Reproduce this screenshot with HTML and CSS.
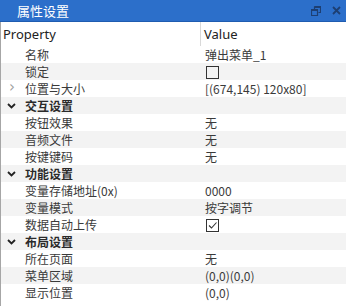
FILE: index.html
```html
<!DOCTYPE html>
<html>
<head>
<meta charset="utf-8">
<link rel="stylesheet" href="styles.css">
</head>
<body>
<div class="panel">
  <div class="titlebar">
    <span class="title">属性设置</span>
    <span class="tools">
      <svg class="ico" width="10" height="10" viewBox="0 0 10 10"><path d="M3.5 0.5h6v6h-2M0.5 3.5h6v6h-6z M3.5 0.5v3" fill="none" stroke="#1d3f73" stroke-width="1.2"/><path d="M0.5 3.5h6v1.5h-6z" fill="#1d3f73"/><path d="M3.5 0.5h6v1.5h-6z" fill="#1d3f73"/></svg>
      <svg class="ico" width="9" height="9" viewBox="0 0 9 9"><path d="M1 1l7 7M8 1l-7 7" stroke="#1d3f73" stroke-width="1.8"/></svg>
    </span>
  </div>
  <div class="grid">
    <div class="hd hname">Property</div><div class="hd hval">Value</div>

    <div class="row w"><div class="name">名称</div><div class="val">弹出菜单_1</div></div>
    <div class="row g"><div class="name">锁定</div><div class="val"><span class="cb"></span></div></div>
    <div class="row w"><div class="name"><span class="exp">›</span>位置与大小</div><div class="val">[(674,145) 120x80]</div></div>
    <div class="row g cat"><div class="name"><svg class="chev" width="9" height="6" viewBox="0 0 9 6"><path d="M1 1l3.5 3.5L8 1" fill="none" stroke="#222" stroke-width="1.8"/></svg>交互设置</div><div class="val"></div></div>
    <div class="row w"><div class="name">按钮效果</div><div class="val">无</div></div>
    <div class="row g"><div class="name">音频文件</div><div class="val">无</div></div>
    <div class="row w"><div class="name">按键键码</div><div class="val">无</div></div>
    <div class="row g cat"><div class="name"><svg class="chev" width="9" height="6" viewBox="0 0 9 6"><path d="M1 1l3.5 3.5L8 1" fill="none" stroke="#222" stroke-width="1.8"/></svg>功能设置</div><div class="val"></div></div>
    <div class="row w"><div class="name">变量存储地址(0x)</div><div class="val">0000</div></div>
    <div class="row g"><div class="name">变量模式</div><div class="val">按字调节</div></div>
    <div class="row w"><div class="name">数据自动上传</div><div class="val"><span class="cb"><svg width="11" height="11" viewBox="0 0 11 11"><path d="M2 5.5l2.5 2.5L9.5 2.5" fill="none" stroke="#333" stroke-width="1.1"/></svg></span></div></div>
    <div class="row g cat"><div class="name"><svg class="chev" width="9" height="6" viewBox="0 0 9 6"><path d="M1 1l3.5 3.5L8 1" fill="none" stroke="#222" stroke-width="1.8"/></svg>布局设置</div><div class="val"></div></div>
    <div class="row w"><div class="name">所在页面</div><div class="val">无</div></div>
    <div class="row g"><div class="name">菜单区域</div><div class="val">(0,0)(0,0)</div></div>
    <div class="row w"><div class="name">显示位置</div><div class="val">(0,0)</div></div>
  </div>
</div>
</body>
</html>
```
FILE: styles.css
```css
html, body {
  margin: 0;
  padding: 0;
  background: #ffffff;
}
body {
  width: 346px;
  height: 306px;
  overflow: hidden;
  font-family: "Noto Sans", "Noto Sans CJK SC", sans-serif;
  font-size: 12px;
  color: #3a3a3a;
}
.panel {
  display: flex;
  flex-direction: column;
  height: 306px;
}
.titlebar {
  height: 21px;
  background: #2c6fca;
  border-bottom: 1px solid #1f5cb0;
  display: flex;
  align-items: center;
  justify-content: space-between;
  padding-left: 17px;
  padding-right: 5px;
}
.title {
  color: #ffffff;
  font-family: "Noto Sans CJK SC", sans-serif;
  font-size: 13px;
  line-height: 21px;
}
.tools {
  display: flex;
  align-items: center;
  gap: 11px;
}
.ico { display: block; }
.grid {
  flex: 1;
  border-left: 1px solid #a6a6a6;
  display: grid;
  grid-template-columns: 200px 1fr;
  grid-auto-rows: 17px;
  grid-template-rows: 24px;
  align-content: start;
}
.hname, .hval {
  height: 24px;
  line-height: 24px;
  font-size: 13px;
  color: #222;
}
.hname {
  padding-left: 2px;
  border-right: 1px solid #d9d9d9;
}
.hval {
  padding-left: 3px;
}
.row {
  display: contents;
}
.row .name, .row .val {
  height: 17px;
  line-height: 17px;
  white-space: nowrap;
  font-family: "Noto Sans CJK SC", sans-serif;
  font-size: 12px;
}
.row .name {
  padding-left: 24px;
  position: relative;
}
.row .val {
  padding-left: 4px;
}
.row.g .name, .row.g .val { background: #f3f3f3; }
.row.w .name, .row.w .val { background: #ffffff; }
.cat .name {
  font-weight: bold;
  color: #2a2a2a;
}
.chev {
  position: absolute;
  left: 6px;
  top: 6px;
}
.exp {
  position: absolute;
  left: 8px;
  top: -1px;
  color: #a0a0a0;
  font-size: 15px;
  font-family: "DejaVu Sans", sans-serif;
}
.cb {
  display: inline-block;
  width: 11px;
  height: 11px;
  border: 1px solid #333;
  vertical-align: middle;
  margin-top: -3px;
  margin-left: 1px;
  position: relative;
}
.cb svg {
  position: absolute;
  left: 0;
  top: 0;
}
```
